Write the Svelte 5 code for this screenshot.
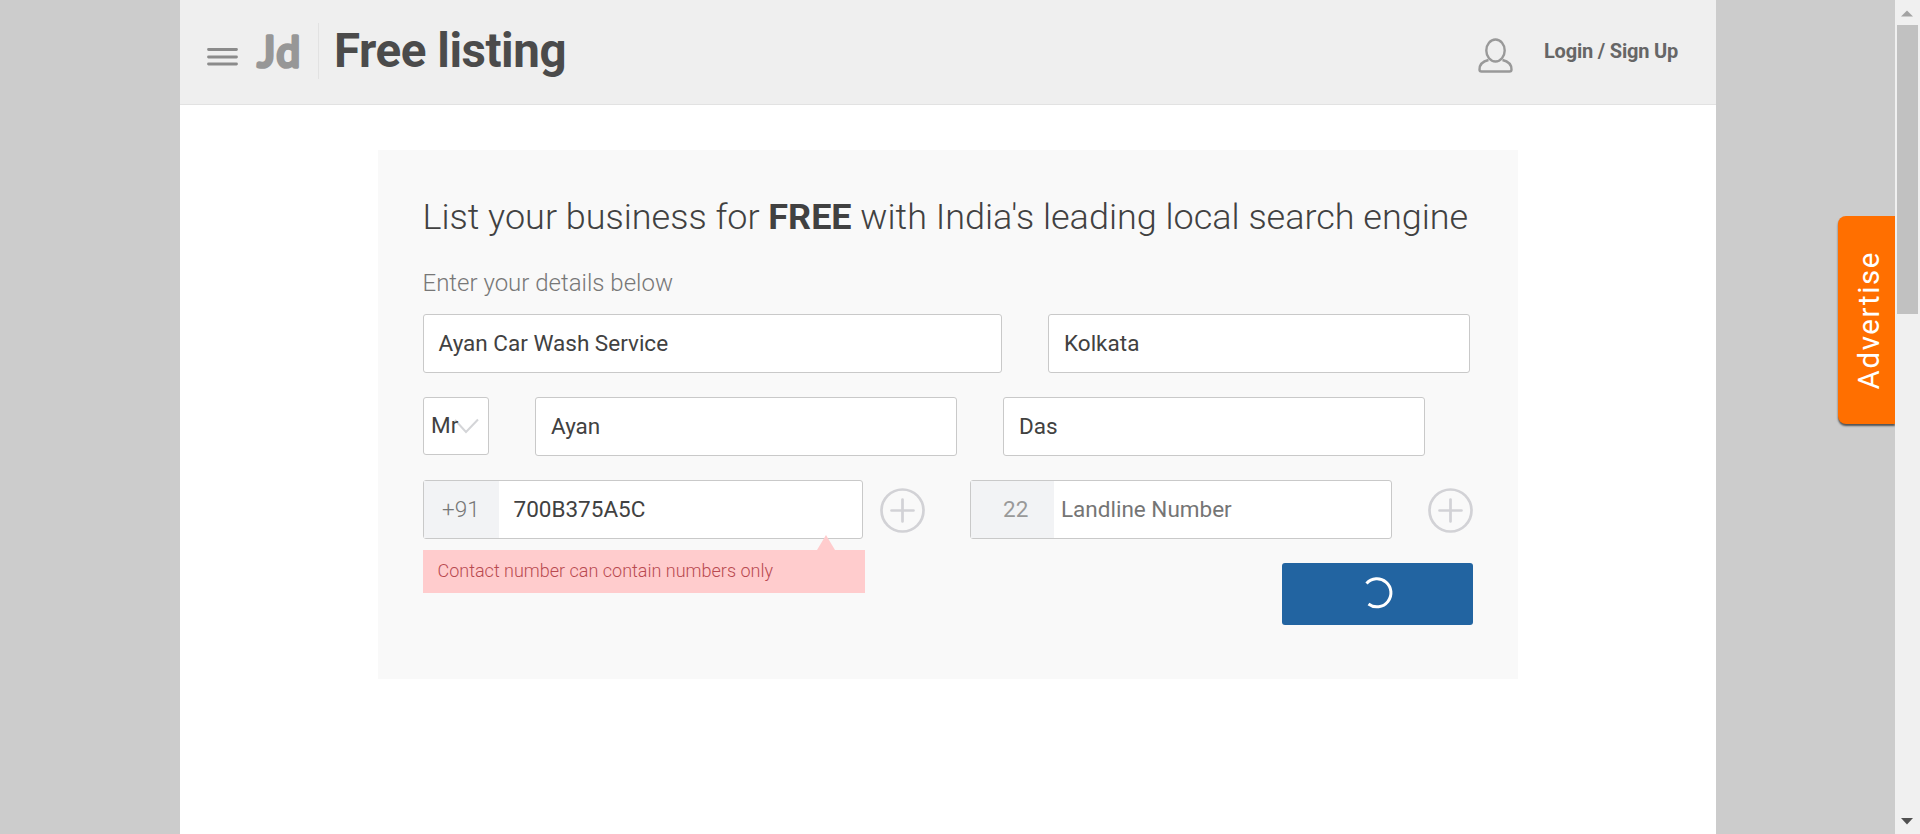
<script>
  const plus = 'M22.5 11.5V33.5M11.5 22.5H33.5';
</script>

{#snippet addIcon()}
  <svg class="add" viewBox="0 0 45 45" width="45" height="45">
    <circle cx="22.5" cy="22.5" r="21" />
    <path d={plus} />
  </svg>
{/snippet}

<div class="window">
  <div class="page">
    <header>
      <svg class="menu" width="31" height="20" viewBox="0 0 31 20">
        <path d="M1.5 2.5H29.5M1.5 10H29.5M1.5 17H29.5" />
      </svg>
      <svg class="logo" width="48" height="60" viewBox="0 0 48 60">
        <text x="3.5 22.5" y="44">Jd</text>
      </svg>
      <h1>Free listing</h1>
      <svg class="user" width="35" height="36" viewBox="0 0 35 36">
        <ellipse cx="17.5" cy="12.5" rx="9.2" ry="11" />
        <path d="M10.5 22C4 23.5 1.5 26.5 1.5 31.5Q1.5 33.5 3.5 33.5H31.5Q33.5 33.5 33.5 31.5C33.5 26.5 31 23.5 24.5 22" />
      </svg>
      <a class="login">Login / Sign Up</a>
    </header>

    <main>
      <h2>List your business for <b>FREE</b> with India's leading local search engine</h2>
      <p class="sub">Enter your details below</p>
      <div class="row first">
        <div class="field company"><span>Ayan Car Wash Service</span></div>
        <div class="field"><span>Kolkata</span></div>
      </div>
      <div class="row second">
        <div class="field title">
          <span>Mr</span>
          <svg width="26" height="16" viewBox="0 0 26 16"><path d="M1 2L12 14L24 1.500" /></svg>
        </div>
        <div class="field"><span>Ayan</span></div>
        <div class="field"><span>Das</span></div>
      </div>
      <div class="row third">
        <div class="field mobile"><span class="prefix">+91</span><span>700B375A5C</span></div>
        {@render addIcon()}
        <div class="field landline"><span class="prefix">22</span><span class="hint">Landline Number</span></div>
        {@render addIcon()}
      </div>
      <div class="bottom">
        <div class="error"><span>Contact number can contain numbers only</span></div>
        <button aria-label="Submit">
          <svg width="34" height="34" viewBox="0 0 34 34"><path d="M6.500 7.500A14 14 0 1 1 8.500 28" /></svg>
        </button>
      </div>
    </main>
  </div>

  <div class="advertise"><span>Advertise</span></div>

  <div class="scrollbar">
    <svg width="13" height="7" viewBox="0 0 13 7"><path d="M0 6.500L6 .5L12 6.500Z" fill="#a3a3a3" /></svg>
    <div class="thumb"></div>
    <svg class="down" width="13" height="7" viewBox="0 0 13 7"><path d="M0 0H12L6 6.500Z" fill="#505050" /></svg>
  </div>
</div>

<style>
  :global(body) { margin: 0; overflow: hidden; }
  * { box-sizing: border-box; }
  .window {
    position: relative;
    display: flex;
    width: 1920px;
    height: 834px;
    padding-left: 180px;
    background: #ccc;
    font-family: Roboto, sans-serif;
    color: #414141;
  }
  .page { width: 1536px; background: #fff; }
  header {
    display: flex;
    align-items: flex-start;
    height: 105px;
    padding-left: 27px;
    background: #efefef;
    border-bottom: 1px solid #e2e2e2;
  }
  svg { display: block; flex: none; fill: none; }
  .menu { margin-top: 47px; stroke: #8b8b8b; stroke-width: 2.800; stroke-linecap: round; }
  .logo { margin: 23px 0 0 16px; overflow: visible; }
  .logo text {
    font: 400 42px Lato, sans-serif;
    fill: #979797;
    stroke: #979797;
    stroke-width: 3.6;
    stroke-linejoin: round;
  }
  h1 {
    margin: 23px 0 0 16px;
    height: 56px;
    padding-left: 15px;
    border-left: 1px solid #e2e2e2;
    font-size: 47.5px;
    line-height: 57px;
    font-weight: 700;
    letter-spacing: -.45px;
    color: #4b4b4b;
    white-space: nowrap;
  }
  .user { margin: 38px 0 0 auto; stroke: #999; stroke-width: 2.4; }
  .login {
    width: 172px;
    margin: 39px 0 0 31px;
    font-size: 20px;
    line-height: 25px;
    font-weight: 700;
    letter-spacing: -.2px;
    color: #666;
    white-space: nowrap;
  }
  main {
    width: 1140px;
    height: 529px;
    margin: 45px 0 0 198px;
    padding: 45px 45px 0;
    background: #f9f9f9;
    white-space: nowrap;
  }
  h2 { margin: 0 0 0 -.5px; font-size: 35.980px; line-height: 44px; font-weight: 300; }
  h2 b { font-weight: 700; }
  .sub { margin: 29px 0 0 -.5px; font-size: 24px; line-height: 30px; font-weight: 300; color: #777; }
  .row { display: flex; font-size: 22.5px; }
  .first { margin-top: 16px; gap: 46px; }
  .second { margin-top: 24px; gap: 46px; }
  .third { margin-top: 24px; }
  .field {
    display: flex;
    align-items: center;
    width: 422px;
    height: 59px;
    padding: 0 15px 2px;
    background: #fff;
    border: 1px solid #c9c9c9;
    border-radius: 3px;
  }
  .company { width: 579px; padding-left: 14.5px; }
  .title { width: 66px; height: 58px; padding: 0 0 2px 7px; }
  .title span { z-index: 1; }
  .title svg { margin: 2px 0 0 -4px; stroke: #d4d5d8; stroke-width: 2; }
  .mobile { width: 440px; padding: 0; }
  .landline { margin-left: 45px; padding: 0; }
  .prefix {
    width: 75px;
    height: 57px;
    margin-right: 15px;
    padding-left: 18px;
    background: #f2f3f5;
    line-height: 56px;
    font-weight: 300;
    color: #777;
  }
  .prefix + span { padding-bottom: 2px; }
  .mobile .prefix { margin-right: 14.5px; }
  .title span { position: relative; }
  .landline .prefix { width: 83px; margin-right: 7px; padding-left: 32px; font-weight: 400; color: #999; }
  .hint { color: #757575; }
  .add { margin: 8px 0 0 17px; stroke: #d2d2d6; stroke-width: 2.7; stroke-linecap: round; }
  .landline + .add { margin-left: 36px; }
  .bottom { display: flex; justify-content: space-between; align-items: flex-start; }
  .error {
    position: relative;
    width: 442px;
    height: 43px;
    margin-top: 11px;
    padding-left: 14.5px;
    background: #ffcccd;
    font-size: 18px;
    line-height: 42px;
    font-weight: 300;
    color: #b94a50;
  }
  .error::before {
    content: '';
    position: absolute;
    top: -15px;
    left: 394px;
    border: 9px solid transparent;
    border-top: 0;
    border-bottom: 15px solid #ffcccd;
  }
  button {
    display: flex;
    align-items: center;
    justify-content: center;
    width: 191px;
    height: 62px;
    margin-top: 24px;
    padding: 0 2px 2px 0;
    border: 0;
    border-radius: 3px;
    background: #2264a1;
  }
  button svg { stroke: #fff; stroke-width: 3; }
  .advertise {
    position: absolute;
    left: 1838px;
    top: 216px;
    display: flex;
    align-items: center;
    justify-content: center;
    width: 57px;
    height: 208px;
    padding-left: 5px;
    border-radius: 8px 0 0 8px;
    background: #ff6f00;
    box-shadow: 0 2px 2px rgba(0, 0, 0, .6);
    clip-path: inset(-4px 0 -6px -4px);
    font-size: 29.5px;
    letter-spacing: 1.6px;
    color: #fff;
  }
  .advertise span { writing-mode: vertical-rl; transform: rotate(180deg); line-height: 36px; }
  .scrollbar {
    display: flex;
    flex-direction: column;
    align-items: center;
    width: 25px;
    height: 834px;
    margin-left: auto;
    padding: 10px 0 9px;
    background: #f0f0f0;
  }
  .thumb { width: 21px; height: 289px; margin-top: 8px; background: #c1c1c1; }
  .down { margin-top: auto; }
</style>
